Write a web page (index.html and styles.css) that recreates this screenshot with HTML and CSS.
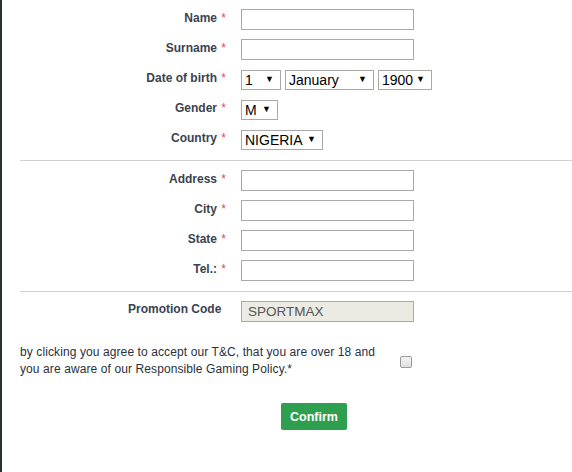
FILE: index.html
```html
<!DOCTYPE html>
<html>
<head>
<meta charset="utf-8">
<link rel="stylesheet" href="styles.css">
</head>
<body>
<div class="page">
  <form class="form">
    <div class="group">
      <div class="row"><label class="lbl">Name <span class="req">*</span></label><input class="txt" type="text"></div>
      <div class="row"><label class="lbl">Surname <span class="req">*</span></label><input class="txt" type="text"></div>
      <div class="row"><label class="lbl">Date of birth <span class="req">*</span></label>
        <div class="selects">
          <div class="sel w-day"><span>1</span><span class="arr">&#9660;</span></div>
          <div class="sel w-month"><span>January</span><span class="arr">&#9660;</span></div>
          <div class="sel w-year"><span>1900</span><span class="arr">&#9660;</span></div>
        </div>
      </div>
      <div class="row"><label class="lbl">Gender <span class="req">*</span></label>
        <div class="sel w-gender"><span>M</span><span class="arr">&#9660;</span></div>
      </div>
      <div class="row"><label class="lbl">Country <span class="req">*</span></label>
        <div class="sel w-country"><span>NIGERIA</span><span class="arr">&#9660;</span></div>
      </div>
    </div>
    <hr class="sep">
    <div class="group">
      <div class="row"><label class="lbl">Address <span class="req">*</span></label><input class="txt" type="text"></div>
      <div class="row"><label class="lbl">City <span class="req">*</span></label><input class="txt" type="text"></div>
      <div class="row"><label class="lbl">State <span class="req">*</span></label><input class="txt" type="text"></div>
      <div class="row"><label class="lbl">Tel.: <span class="req">*</span></label><input class="txt" type="text"></div>
    </div>
    <hr class="sep">
    <div class="group">
      <div class="row"><label class="lbl promo">Promotion Code</label><input class="txt disabled" type="text" value="SPORTMAX" disabled></div>
    </div>
    <div class="terms">
      <p class="terms-text">by clicking you agree to accept our T&amp;C, that you are over 18 and you are aware of our Responsible Gaming Policy.*</p>
      <span class="check"></span>
    </div>
    <div class="actions">
      <button type="button" class="btn">Confirm</button>
    </div>
  </form>
</div>
</body>
</html>
```

FILE: styles.css
```css
* { box-sizing: border-box; }
html, body { margin: 0; padding: 0; background: #fff; }
body {
  font-family: "Liberation Sans", Arial, sans-serif;
  width: 572px;
  height: 472px;
  overflow: hidden;
}
.page {
  border-left: 2px solid #2b313b;
  height: 472px;
  padding-top: 9px;
}
.form { margin: 0; }
.group {
  display: flex;
  flex-direction: column;
  gap: 9px;
}
.row {
  display: grid;
  grid-template-columns: 224px 1fr;
  column-gap: 15px;
  align-items: center;
  height: 21px;
}
.lbl {
  text-align: right;
  font-size: 12px;
  font-weight: bold;
  color: #3a4251;
  white-space: nowrap;
  margin-top: -3px;
}
.lbl.promo { text-align: left; padding-left: 126px; margin-top: -6px; }
.req { color: #e5456a; font-weight: normal; margin-left: 1px; }
.txt {
  width: 173px;
  height: 21px;
  border: 1px solid #a9a9a9;
  margin: 0;
  padding: 0 0 0 6px;
  font-family: "Liberation Sans", Arial, sans-serif;
  font-size: 13.5px;
  background: #fff;
}
.txt.disabled {
  background: #ebebe4;
  color: #555;
}
.selects { display: flex; gap: 4px; }
.sel {
  height: 20px;
  border: 1px solid #a9a9a9;
  display: flex;
  align-items: center;
  justify-content: space-between;
  padding: 0 6px 0 3px;
  font-size: 14px;
  color: #000;
  background: #fff;
}
.arr { font-size: 9px; line-height: 1; }
.w-day { width: 40px; }
.w-month { width: 89px; }
.w-year { width: 54px; }
.w-gender { width: 37px; }
.w-country { width: 82px; }
.sep {
  border: 0;
  border-top: 1px solid #d0d0d0;
  margin: 10px 0 9px 18px;
  height: 0;
}
.terms {
  display: flex;
  align-items: center;
  margin-top: 22px;
  padding-left: 18px;
}
.terms-text {
  margin: 0;
  width: 362px;
  font-size: 12px;
  letter-spacing: 0.1px;
  line-height: 17px;
  color: #2a303c;
}
.check {
  width: 12px;
  height: 12px;
  margin-left: 18px;
  margin-top: 2px;
  border: 1px solid #9a9a9a;
  border-radius: 2px;
  background: linear-gradient(#f4f4f4, #dedede);
}
.actions {
  padding-left: 279px;
  margin-top: 25px;
}
.btn {
  width: 66px;
  height: 27px;
  border: 0;
  border-radius: 2px;
  background: #2e9e4f;
  color: #fff;
  font-family: "Liberation Sans", Arial, sans-serif;
  font-weight: bold;
  font-size: 12.5px;
  padding: 0;
}
```
